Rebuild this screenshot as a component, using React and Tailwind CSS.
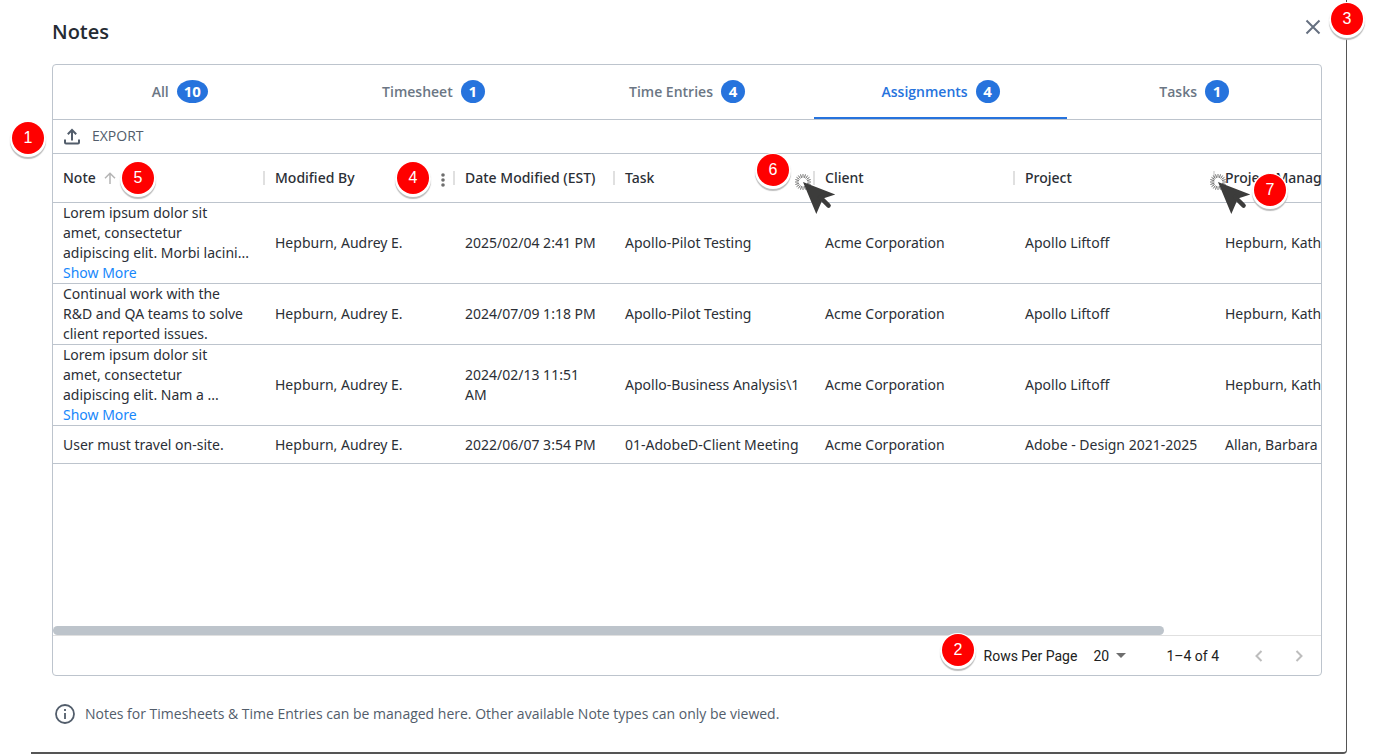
import { useState } from 'react';

const TABS = [
  { label: 'All', count: 10 },
  { label: 'Timesheet', count: 1 },
  { label: 'Time Entries', count: 4 },
  { label: 'Assignments', count: 4 },
  { label: 'Tasks', count: 1 },
];

const COLUMNS = ['Note', 'Modified By', 'Date Modified (EST)', 'Task', 'Client', 'Project', 'Project Manager'];

const ROWS = [
  {
    note: 'Lorem ipsum dolor sit\namet, consectetur\nadipiscing elit. Morbi lacini...',
    more: true,
    cells: ['Hepburn, Audrey E.', '2025/02/04 2:41 PM', 'Apollo-Pilot Testing', 'Acme Corporation', 'Apollo Liftoff', 'Hepburn, Katharine'],
  },
  {
    note: 'Continual work with the\nR&D and QA teams to solve\nclient reported issues.',
    cells: ['Hepburn, Audrey E.', '2024/07/09 1:18 PM', 'Apollo-Pilot Testing', 'Acme Corporation', 'Apollo Liftoff', 'Hepburn, Katharine'],
  },
  {
    note: 'Lorem ipsum dolor sit\namet, consectetur\nadipiscing elit. Nam a ...',
    more: true,
    cells: ['Hepburn, Audrey E.', '2024/02/13 11:51\nAM', 'Apollo-Business Analysis\\1', 'Acme Corporation', 'Apollo Liftoff', 'Hepburn, Katharine'],
  },
  {
    note: 'User must travel on-site.',
    cells: ['Hepburn, Audrey E.', '2022/06/07 3:54 PM', '01-AdobeD-Client Meeting', 'Acme Corporation', 'Adobe - Design 2021-2025', 'Allan, Barbara'],
  },
];

// numbered callouts that float over the dialog
const CALLOUTS = [
  { n: 1, pos: 'left-3 top-[122px]' },
  { n: 2, pos: 'right-[403px] top-[634px]' },
  { n: 3, pos: 'right-[14px] top-[3px]' },
  { n: 4, pos: 'left-[397px] top-[162px]' },
  { n: 5, pos: 'left-[122px] top-[162px]' },
  { n: 6, pos: 'left-[757px] top-[154px]' },
  { n: 7, pos: 'left-[1254px] top-[174px]' },
];

const RAYS = Array.from({ length: 20 }, (_, i) => i * 18);

function Callout({ n, pos }) {
  return (
    <span
      className={`absolute ${pos} flex size-8 items-center justify-center rounded-full bg-[#ff0000] font-['Liberation_Sans',sans-serif] text-base text-white shadow-[0_1px_0_2px_#ffffff,0_3px_1px_2px_#bdbdbd]`}
    >
      {n}
    </span>
  );
}

function ClickCursor({ pos }) {
  return (
    <svg className={`absolute ${pos}`} width="44" height="44" viewBox="0 0 44 44" aria-hidden="true">
      <g stroke="#3c3c3b" strokeWidth="0.7">
        {RAYS.map((a) => (
          <line key={a} x1="10" y1="5.6" x2="10" y2="2" transform={`rotate(${a} 10 10)`} />
        ))}
      </g>
      <path d="M10 10 42.3 22.6 30 26.6 23.3 42Z" fill="#3c3c3b" />
      <path d="M27 25 35.6 33.6" stroke="#3c3c3b" strokeWidth="4.4" strokeLinecap="round" />
    </svg>
  );
}

export default function App() {
  const [active, setActive] = useState('Assignments');

  return (
    <div className="relative min-h-screen overflow-hidden bg-white pr-[30px] pl-[31px] font-['Open_Sans',sans-serif] text-sm text-[#2b2f36]">
      <div className="flex min-h-screen flex-col rounded-br border-r border-b-2 border-[#555555] pr-6 pl-[21px]">
        <header className="flex h-16 items-start justify-between pt-[18px]">
          <h1 className="text-xl leading-7 font-semibold text-[#252b33]">Notes</h1>
          <button aria-label="Close" className="text-[#667080]">
            <svg width="18" height="18" viewBox="0 0 18 18" fill="none" stroke="currentColor" strokeWidth="2">
              <path d="M2.5 2.5 15.5 15.5M15.5 2.5 2.5 15.5" />
            </svg>
          </button>
        </header>

        <section className="flex flex-1 flex-col overflow-hidden rounded border border-[#bdc4cd]">
          <nav className="flex h-[55px] border-b border-[#bdc4cd]">
            {TABS.map(({ label, count }) => (
              <button
                key={label}
                onClick={() => setActive(label)}
                className={`flex flex-1 items-center justify-center gap-2 border-b-2 pt-px font-semibold ${
                  active === label ? 'border-[#2673dd] text-[#2673dd]' : 'border-transparent text-[#6b7684]'
                }`}
              >
                {label}
                <span className="flex h-[23px] min-w-6 items-center justify-center rounded-[50%] bg-[#2673dd] px-[7px] text-[15px] font-bold text-white">
                  {count}
                </span>
              </button>
            ))}
          </nav>

          <div className="flex h-[34px] items-center border-b border-[#bdc4cd] px-[10px] pb-[2px]">
            <button className="flex items-center gap-[11px] text-[#525d6b]">
              <svg className="mt-px" width="18" height="17" viewBox="0 0 18 17" fill="none" stroke="currentColor" strokeWidth="2">
                <path d="M2 11.5V14.6Q2 15.6 3 15.6H15Q16 15.6 16 14.6V11.5M9 12.5V2M4.8 6.2 9 2 13.2 6.2" />
              </svg>
              EXPORT
            </button>
          </div>

          <div className="flex-1 overflow-hidden">
            <table className="w-[1447px] table-fixed border-separate border-spacing-0 text-left font-['Noto_Sans',sans-serif]">
              <colgroup>
                <col className="w-[212px]" />
                <col className="w-[190px]" />
                <col className="w-[160px]" />
                <col className="w-[200px]" />
                <col className="w-[200px]" />
                <col className="w-[200px]" />
                <col />
              </colgroup>
              <thead>
                <tr className="h-[49px]">
                  {COLUMNS.map((name, i) => (
                    <th key={name} className="border-b border-[#bdc4cd] p-0 pl-[10px] font-medium">
                      <div className="flex items-center">
                        <span className="whitespace-nowrap">{name}</span>
                        {name === 'Note' && (
                          <svg className="ml-2" width="12" height="12" viewBox="0 0 12 12" fill="none" stroke="#b5b5b5" strokeWidth="1.5">
                            <path d="M6 12V1.5M1 6.2 6 1.2 11 6.2" />
                          </svg>
                        )}
                        <span className="ml-auto flex items-center gap-2">
                          {name === 'Modified By' && (
                            <button aria-label="Column menu" className="pt-1">
                              <svg width="4" height="14" viewBox="0 0 4 14" fill="#6e6e6e">
                                <circle cx="2" cy="2" r="1.8" />
                                <circle cx="2" cy="7" r="1.8" />
                                <circle cx="2" cy="12" r="1.8" />
                              </svg>
                            </button>
                          )}
                          {i < COLUMNS.length - 1 && <span className="h-[14px] border-r-2 border-[#e0e0e0]" />}
                        </span>
                      </div>
                    </th>
                  ))}
                </tr>
              </thead>
              <tbody>
                {ROWS.map((row) => (
                  <tr key={row.note} className="h-[38px]">
                    <td className="border-b border-[#bdc4cd] px-[10px] py-0 whitespace-pre-line">
                      {row.note}
                      {row.more && <button className="block text-[#1787fb]">Show More</button>}
                    </td>
                    {row.cells.map((cell, i) => (
                      <td key={i} className="border-b border-[#bdc4cd] px-[10px] py-0 whitespace-pre-line">
                        {cell}
                      </td>
                    ))}
                  </tr>
                ))}
              </tbody>
            </table>
          </div>

          <div className="h-[9px] w-[87.6%] rounded-full bg-[#bdc4cb]" />

          <footer className="flex h-10 items-center justify-end border-t border-[#e0e0e0] pr-[10px] font-['Roboto',sans-serif] text-[#212121]">
            <label htmlFor="rows">Rows Per Page</label>
            <div className="relative ml-4 flex items-center">
              <select id="rows" className="w-[33px] appearance-none bg-transparent">
                <option>20</option>
              </select>
              <svg className="pointer-events-none absolute right-0" width="10" height="5" viewBox="0 0 10 5" fill="#6e6e6e">
                <path d="M0 0H10L5 5Z" />
              </svg>
            </div>
            <span className="ml-10">1–4 of 4</span>
            <button aria-label="Previous page" disabled className="ml-7 p-1 text-[#bdbdbd]">
              <svg width="16" height="16" viewBox="0 0 16 16" fill="none" stroke="currentColor" strokeWidth="2">
                <path d="M10.5 3 5.5 8 10.5 13" />
              </svg>
            </button>
            <button aria-label="Next page" disabled className="ml-4 p-1 text-[#bdbdbd]">
              <svg width="16" height="16" viewBox="0 0 16 16" fill="none" stroke="currentColor" strokeWidth="2">
                <path d="M5.5 3 10.5 8 5.5 13" />
              </svg>
            </button>
          </footer>
        </section>

        <p className="flex h-[76px] items-center gap-[10px] pl-[3px] text-[#525d6b]">
          <svg width="20" height="20" viewBox="0 0 20 20" fill="none" stroke="currentColor" strokeWidth="1.8">
            <circle cx="10" cy="10" r="9" />
            <path d="M10 9V15M10 5V7" />
          </svg>
          Notes for Timesheets &amp; Time Entries can be managed here. Other available Note types can only be viewed.
        </p>
      </div>

      <ClickCursor pos="left-[793px] top-[172px]" />
      <ClickCursor pos="left-[1208px] top-[172px]" />
      {CALLOUTS.map((c) => (
        <Callout key={c.n} {...c} />
      ))}
    </div>
  );
}
